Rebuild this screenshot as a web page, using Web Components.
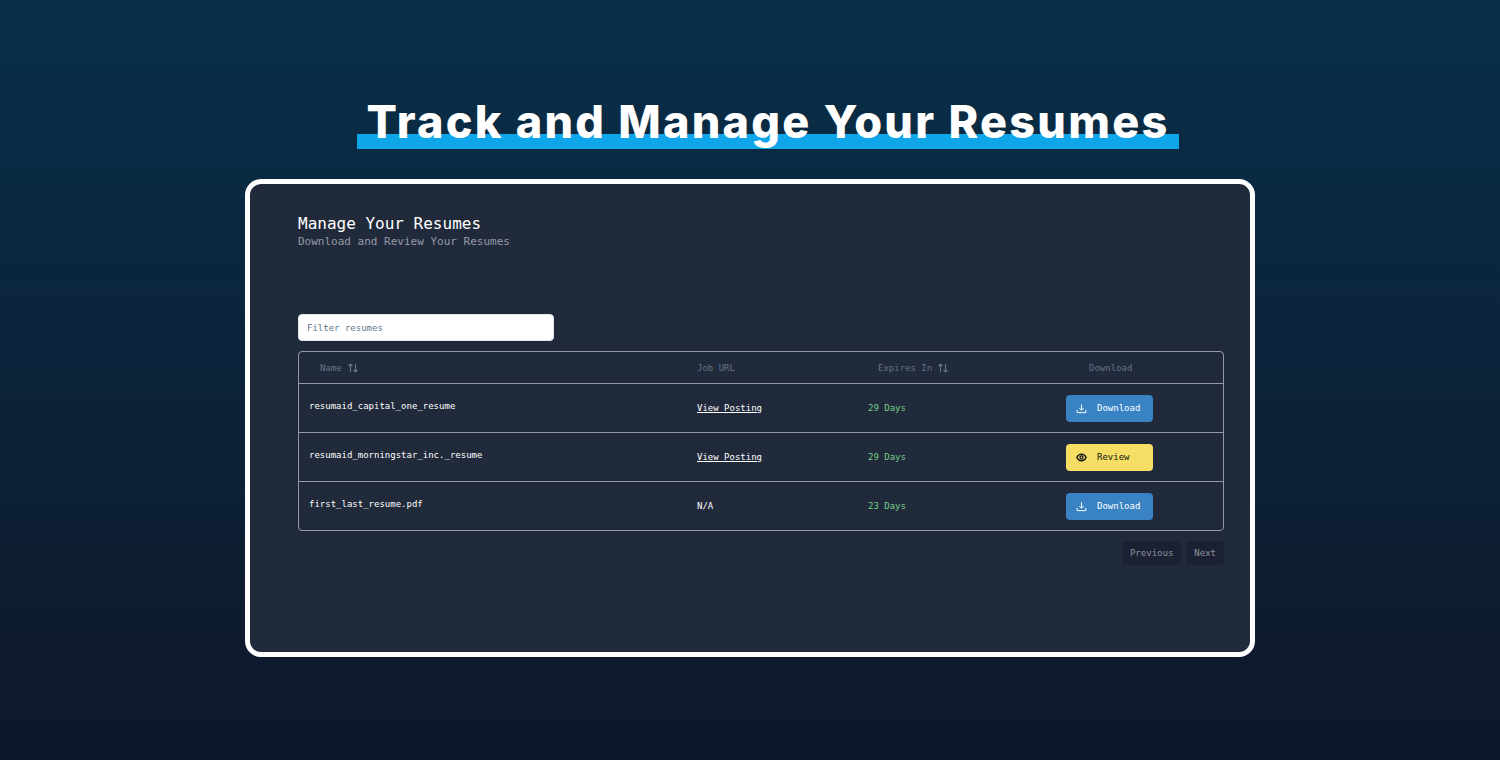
<!DOCTYPE html>
<html lang="en">
<head>
<meta charset="utf-8">
<title>Resumes</title>
<style>
	body {
		margin: 0;
		min-height: 100vh;
		color: #fff;
		background: linear-gradient(#082f49, #0f172a);
	}
</style>
</head>
<body>
	<resume-showcase>
		<marked-heading slot="heading">Track and Manage Your Resumes</marked-heading>
		<resume-manager></resume-manager>
	</resume-showcase>

<script>
// Base class: each element clones its own static template into an open root.
class TemplateElement extends HTMLElement {
	constructor() {
		super();
		this.attachShadow({ mode: 'open' });
		this.shadowRoot.append(this.constructor.template.content.cloneNode(true));
	}
}

function template(html) {
	let t = document.createElement('template');
	t.innerHTML = html;
	return t;
}

// Page section: heading on top, framed panel below it.
class ResumeShowcase extends TemplateElement {}
ResumeShowcase.template = template(`
	<style>
		:host {
			display: flex;
			flex-direction: column;
			align-items: center;
			gap: 27px;
			padding: 92px 24px 100px;
		}
		header {
			padding-left: 36px;
		}
		main {
			box-sizing: border-box;
			width: 100%;
			max-width: 1010px;
		}
	</style>
	<header><slot name="heading"></slot></header>
	<main><slot></slot></main>
`);

// Large heading with a marker stripe behind the lower part of the letters.
class MarkedHeading extends TemplateElement {}
MarkedHeading.template = template(`
	<style>
		:host {
			display: block;
		}
		h1 {
			margin: 0;
			padding: 0 10px;
			font: 800 45px/60px Inter, sans-serif;
			letter-spacing: 0.05em;
			background: linear-gradient(#0ea5e9, #0ea5e9) 0 42px / 100% 15px no-repeat;
		}
	</style>
	<h1><slot></slot></h1>
`);

// Button with an icon in front of the label; variant picks the colours.
class ActionButton extends TemplateElement {
	connectedCallback() {
		let icon = ActionButton.icons[this.getAttribute('icon')];
		if (icon) this.shadowRoot.querySelector('svg').innerHTML = icon;
	}
}
ActionButton.icons = {
	download: '<path d="M1.7 10v4h12.6v-4M8 2v8.4M4.8 7.3 8 10.5l3.2-3.2"/>',
	eye: '<path d="M1.2 8C2.6 5 5 3.2 8 3.2S13.4 5 14.8 8C13.4 11 11 12.8 8 12.8S2.6 11 1.2 8Z"/><circle cx="8" cy="8" r="2.2"/>'
};
ActionButton.template = template(`
	<style>
		:host {
			display: block;
		}
		button {
			display: flex;
			align-items: center;
			gap: 10px;
			width: 87px;
			height: 27px;
			padding: 0 10px;
			border: 0;
			border-radius: 4px;
			font: inherit;
			color: #fff;
			background: #3983c5;
			cursor: pointer;
		}
		:host([variant="review"]) button {
			color: #111;
			background: #f6de65;
		}
		svg {
			flex: none;
			width: 11px;
			height: 11px;
			fill: none;
			stroke: currentColor;
			stroke-width: 1.4;
		}
		:host([variant="review"]) svg {
			stroke-width: 1.8;
		}
	</style>
	<button type="button"><svg viewBox="0 0 16 16" aria-hidden="true"></svg><slot></slot></button>
`);

// Dimmed pager button.
class PagerButton extends TemplateElement {}
PagerButton.template = template(`
	<style>
		:host {
			display: block;
		}
		button {
			height: 24px;
			padding: 0 8px;
			border: 0;
			border-radius: 4px;
			font: inherit;
			color: #8f939d;
			background: #1b2133;
		}
	</style>
	<button type="button"><slot></slot></button>
`);

class SortButton extends TemplateElement {}
SortButton.template = template(`
	<style>
		:host {
			display: block;
		}
		button {
			display: flex;
			align-items: center;
			gap: 5px;
			padding: 0 10px;
			border: 0;
			font: inherit;
			color: inherit;
			background: none;
			cursor: pointer;
		}
		svg {
			width: 12px;
			height: 12px;
			fill: none;
			stroke: currentColor;
			stroke-width: 2.4;
		}
	</style>
	<button type="button"><slot></slot><svg viewBox="0 0 24 24" aria-hidden="true"><path d="m3 8 4-4 4 4M7 4v16M21 16l-4 4-4-4M17 20V4"/></svg></button>
`);

// The panel: titles, filter box, table of resumes and pager.
class ResumeManager extends TemplateElement {
	connectedCallback() {
		let rows = this.shadowRoot.querySelectorAll('tbody tr');
		this.shadowRoot.querySelector('input').oninput = (event) => {
			let text = event.target.value.toLowerCase();
			for (let row of rows) {
				row.hidden = !row.cells[0].textContent.toLowerCase().includes(text);
			}
		};
	}
}
ResumeManager.template = template(`
	<style>
		:host {
			display: block;
			box-sizing: border-box;
			min-height: 478px;
			padding: 30px 26px 30px 48px;
			border: 5px solid #fff;
			border-radius: 16px;
			font: 9px/14px "DejaVu Sans Mono", monospace;
			background: #212a3b;
		}
		h2 {
			margin: 0;
			font-size: 16px;
			font-weight: normal;
			line-height: 20px;
		}
		p {
			margin: 0 0 64px;
			font-size: 11px;
			line-height: 16px;
			color: #949aa7;
		}
		input {
			display: block;
			box-sizing: border-box;
			width: 256px;
			height: 27px;
			margin-bottom: 10px;
			padding: 0 8px;
			border: 1px solid #e2e8f0;
			border-radius: 4px;
			font: inherit;
			color: #0f172a;
			background: #fff;
		}
		input::placeholder {
			color: #64748b;
		}
		.frame {
			border: 1px solid #929aa8;
			border-radius: 4px;
		}
		table {
			width: 100%;
			table-layout: fixed;
			border-collapse: collapse;
		}
		col.url {
			width: 171px;
		}
		col.expires {
			width: 198px;
		}
		col.action {
			width: 168px;
		}
		th {
			height: 31px;
			padding: 0 11px;
			font-weight: normal;
			text-align: left;
			color: #667286;
		}
		th:last-child {
			padding-left: 34px;
		}
		td {
			height: 48px;
			padding: 0 11px;
			border-top: 1px solid #929aa8;
		}
		td:first-child {
			padding: 0 10px 4px;
			height: 44px;
		}
		td:nth-child(3) {
			color: #74cf88;
		}
		a {
			color: inherit;
			text-underline-offset: 1px;
		}
		nav {
			display: flex;
			justify-content: flex-end;
			gap: 5px;
			margin-top: 10px;
		}
	</style>
	<h2>Manage Your Resumes</h2>
	<p>Download and Review Your Resumes</p>
	<input type="text" placeholder="Filter resumes" aria-label="Filter resumes">
	<div class="frame">
		<table>
			<colgroup><col><col class="url"><col class="expires"><col class="action"></colgroup>
			<thead>
				<tr>
					<th><sort-button>Name</sort-button></th>
					<th>Job URL</th>
					<th><sort-button>Expires In</sort-button></th>
					<th>Download</th>
				</tr>
			</thead>
			<tbody>
				<tr>
					<td>resumaid_capital_one_resume</td>
					<td><a href="#capital-one">View Posting</a></td>
					<td>29 Days</td>
					<td><action-button icon="download">Download</action-button></td>
				</tr>
				<tr>
					<td>resumaid_morningstar_inc._resume</td>
					<td><a href="#morningstar">View Posting</a></td>
					<td>29 Days</td>
					<td><action-button icon="eye" variant="review">Review</action-button></td>
				</tr>
				<tr>
					<td>first_last_resume.pdf</td>
					<td>N/A</td>
					<td>23 Days</td>
					<td><action-button icon="download">Download</action-button></td>
				</tr>
			</tbody>
		</table>
	</div>
	<nav aria-label="Pages">
		<pager-button>Previous</pager-button>
		<pager-button>Next</pager-button>
	</nav>
`);

customElements.define('marked-heading', MarkedHeading);
customElements.define('action-button', ActionButton);
customElements.define('pager-button', PagerButton);
customElements.define('sort-button', SortButton);
customElements.define('resume-manager', ResumeManager);
customElements.define('resume-showcase', ResumeShowcase);
</script>
</body>
</html>
